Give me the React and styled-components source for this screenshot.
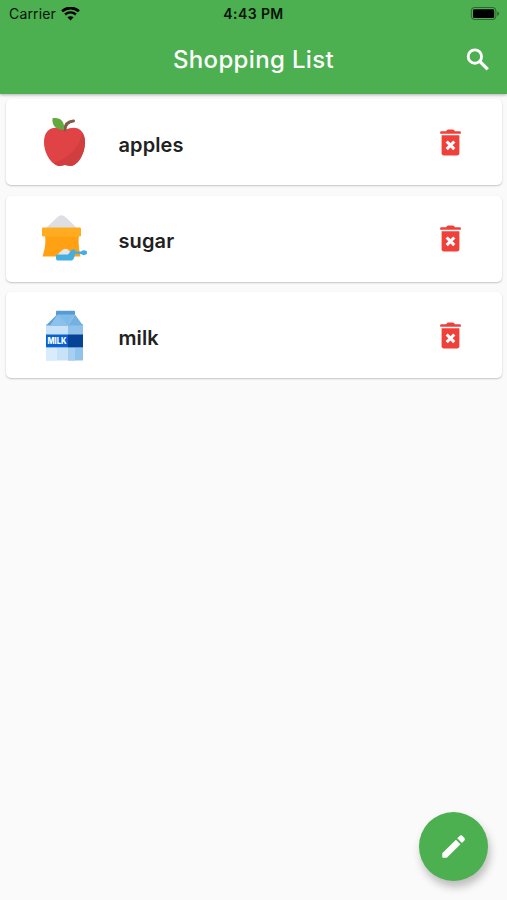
import React from "react";
import styled, { createGlobalStyle } from "styled-components";

const GlobalStyle = createGlobalStyle`
    * {
        box-sizing: border-box;
    }

    body {
        margin: 0;
        background-color: #fafafa;
        font-family: Inter, "Liberation Sans", sans-serif;
    }
`

const StyledScreen = styled.div`
    position: relative;
    display: flex;
    flex-direction: column;
    width: 507px;
    height: 900px;
    overflow: hidden;
    background-color: #fafafa;
`

const StyledHeader = styled.header`
    z-index: 1;
    flex: none;
    height: 94px;
    background-color: #4caf50;
    box-shadow: 0 1px 3px rgba(0, 0, 0, .3);
`

const StatusBar = styled.div`
    display: grid;
    grid-template-columns: 1fr auto 1fr;
    align-items: center;
    height: 27px;
    padding: 0 7px 0 9px;
    color: #071208;
    font-size: 14px;
    line-height: 27px;

    & .carrier {
        display: flex;
        align-items: center;
        gap: 5px;
        letter-spacing: .15px;
    }

    & .time {
        margin-right: 2px;
        font-weight: 600;
        letter-spacing: .4px;
    }

    & .battery {
        justify-self: end;
    }

    & svg {
        display: block;
    }
`

const TitleBar = styled.div`
    display: grid;
    grid-template-columns: 1fr auto 1fr;
    align-items: center;
    height: 65px;
    padding-right: 14px;
    color: #fff;

    & h1 {
        margin: 0 0 0 14px;
        font-size: 24px;
        line-height: 30px;
        font-weight: 500;
        letter-spacing: .35px;
    }

    & svg {
        display: block;
        justify-self: end;
    }
`

const StyledList = styled.main`
    display: flex;
    flex-direction: column;
    gap: 10.5px;
    padding: 5px 5px 0 6px;
`

const StyledCard = styled.article`
    display: flex;
    align-items: center;
    height: 86px;
    padding: 0 34px 0 33px;
    border-radius: 5px;
    background-color: #fff;
    box-shadow: 0 1px 2px rgba(0, 0, 0, .22);

    & h2 {
        flex: 1;
        margin: 5px 0 0 28.5px;
        color: #212121;
        font-size: 20px;
        line-height: 28px;
        font-weight: 600;
        letter-spacing: .1px;
    }

    & svg {
        display: block;
        flex: none;
    }
`

const FloatingButton = styled.button`
    position: absolute;
    right: 19px;
    bottom: 19px;
    display: flex;
    align-items: center;
    justify-content: center;
    width: 69px;
    height: 69px;
    padding: 0;
    border: 0;
    border-radius: 50%;
    background-color: #4caf50;
    color: #fff;
    box-shadow: 2px 6px 9px rgba(0, 0, 0, .25);
`

function WifiIcon() {
    return (
        <svg width="19" height="14" viewBox="0 0 19 14" fill="none" stroke="#000">
            <path d="M1.1 4.3C5.8-.1 13.2-.1 17.9 4.3" strokeWidth="2.8" />
            <path d="M4.1 7.5C7.2 4.7 11.8 4.7 14.9 7.5" strokeWidth="2.4" />
            <path d="M9.5 13.4 6.4 10.2C8.1 8.8 10.9 8.8 12.6 10.2Z" fill="#000" stroke="none" />
        </svg>
    )
}

function BatteryIcon() {
    return (
        <svg className="battery" width="30" height="14" viewBox="0 0 30 14">
            <rect x="1.3" y=".5" width="24.6" height="12" rx="3.2" fill="none" stroke="#000" strokeOpacity=".42" />
            <rect x="3" y="2.2" width="21.2" height="8.8" rx="1.3" fill="#000" />
            <path d="M27.3 4.4c2.2.6 2.2 3.8 0 4.4Z" fillOpacity=".45" />
        </svg>
    )
}

function SearchIcon() {
    return (
        <svg width="30" height="30" viewBox="0 0 24 24" fill="none" stroke="currentColor">
            <circle cx="9.5" cy="9.2" r="5.35" strokeWidth="2.3" />
            <path d="M13.6 13.3 19.8 19.5" strokeWidth="2.7" />
        </svg>
    )
}

function TrashIcon() {
    return (
        <svg width="35" height="35" viewBox="0 0 24 24" fill="#ef4039">
            <path d="M5.3 6a.4.4 0 0 1-.4-.4V5c0-.5.4-.8.8-.8H9l.6-.7c.2-.3.5-.4.8-.4h3.2c.3 0 .6.1.8.4l.6.7h3.3c.5 0 .8.3.8.8v.6a.4.4 0 0 1-.4.4Z" />
            <path d="M5.9 7h12.2v12.4c0 .9-.7 1.5-1.5 1.5H7.4c-.8 0-1.5-.6-1.5-1.5Z" />
            <path d="m9.4 11.3 5.2 5.2m0-5.2-5.2 5.2" stroke="#fff" strokeWidth="2.1" />
        </svg>
    )
}

function PencilIcon() {
    return (
        <svg width="31" height="31" viewBox="0 0 24 24" fill="currentColor">
            <path d="M3.3 17.3 13.9 6.7l3.5 3.5L6.8 20.8H4a.7.7 0 0 1-.7-.7Z" />
            <path d="m14.9 5.7 1.8-1.8c.7-.7 1.6-.7 2.3 0l1.3 1.3c.7.7.7 1.6 0 2.3l-1.8 1.8Z" />
        </svg>
    )
}

function AppleIcon() {
    return (
        <svg width="51" height="51" viewBox="0 0 51 51">
            <path d="M26 13C13 7 5 13 5 25c0 12 8 23 15 24 3 0 4-1 6-1s3 1 6 1c7-1 14-12 14-24C46 13 38 7 26 13Z" fill="#df4346" />
            <path d="M43 15.5C42 27 34 36 24 42c-3 2-6 3-9 4 2 2 4 3 6 3 2 0 3-1 5-1s3 1 6 1c7-1 14-12 14-24 0-4-1-7-3-9.500Z" fill="#d03e40" />
            <path d="M26 13c0-6 3-8.500 8.500-9" fill="none" stroke="#855948" strokeWidth="3" strokeLinecap="round" />
            <path d="M25 12.800C18 13.500 12.500 9 13.500 1.300 21.500 0 26 5 25 12.800Z" fill="#62a83d" />
        </svg>
    )
}

function SugarIcon() {
    return (
        <svg width="51" height="51" viewBox="0 0 51 51">
            <path d="M7 15 18 4.500Q22.500 0 27 4.500L38 15Z" fill="#dedfe2" />
            <path d="M6 22h34c-1 8 0 14 1.500 21.500H3.500C6 36 7 30 6 22Z" fill="#ffa113" />
            <rect x="3" y="14.500" width="39" height="9" rx="1.300" fill="#ffac20" />
            <path d="M18 42 24 36.500q2.500-1.500 5 0l5 5.500Z" fill="#e3e5e9" />
            <path d="M17.500 41.500H29l4-5h2.500q1 2 2.500 2h4q3-2.500 6 0v2.300q-3 2.500-6 .3h-6q-.5 5-3 6.400H18q-2-2-.5-6Z" fill="#43afe0" />
        </svg>
    )
}

function MilkIcon() {
    return (
        <svg width="51" height="51" viewBox="0 0 51 51">
            <path d="M7 14h22v36.500H7Z" fill="#c8e2f8" />
            <path d="M29 14h15v36.500H29Z" fill="#91c2e9" />
            <path d="M17 1.500q0-.8.8-.8h17.400q.8 0 .8.800V5H17Z" fill="#579bd5" />
            <path d="M18 4.500 7 15.500h22L18 4.500Z" fill="#5ba0d9" />
            <path d="M18 5 11 15.500h18Z" fill="#8cc1eb" />
            <path d="M18 4.500h18L29 15.500Z" fill="#80bae8" />
            <path d="M29 15.500 36 4.500l8 11Z" fill="#74b0e1" />
            <path d="M7 38h11v12.500H7Z" fill="#d9ecfb" />
            <path d="M29 38h7v12.500h-7Z" fill="#a6cff0" />
            <path d="M7 24.500h22v12.800H7Z" fill="#0863d0" />
            <path d="M29 24.500h15v12.800H29Z" fill="#064396" />
            <text x="8.500" y="34" fill="#fff" fontFamily="Inter, sans-serif" fontSize="8.500" fontWeight="800" textLength="19" lengthAdjust="spacingAndGlyphs">MILK</text>
        </svg>
    )
}

const items = [
    { name: "apples", icon: AppleIcon },
    { name: "sugar", icon: SugarIcon },
    { name: "milk", icon: MilkIcon },
]

function ShoppingItem(props) {
    const Icon = props.icon

    return (
        <StyledCard>
            <Icon />
            <h2>{props.name}</h2>
            <TrashIcon />
        </StyledCard>
    )
}

function App() {
    return (
        <StyledScreen>
            <GlobalStyle />
            <StyledHeader>
                <StatusBar>
                    <div className="carrier">
                        <span>Carrier</span>
                        <WifiIcon />
                    </div>
                    <span className="time">4:43 PM</span>
                    <BatteryIcon />
                </StatusBar>
                <TitleBar>
                    <span />
                    <h1>Shopping List</h1>
                    <SearchIcon />
                </TitleBar>
            </StyledHeader>
            <StyledList>
                { items.map(item => <ShoppingItem key={item.name} {...item} />) }
            </StyledList>
            <FloatingButton aria-label="Edit list">
                <PencilIcon />
            </FloatingButton>
        </StyledScreen>
    )
}

export default App;
